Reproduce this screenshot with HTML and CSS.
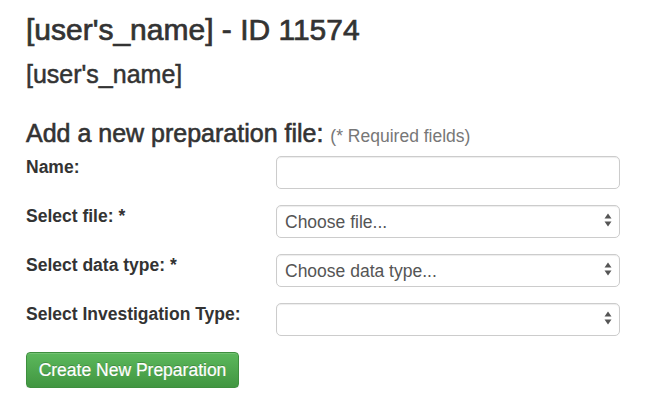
FILE: index.html
```html
<!DOCTYPE html>
<html>
<head>
<meta charset="utf-8">
<link rel="stylesheet" href="styles.css">
</head>
<body>
<div class="page">
  <h2 class="title">[user's_name] - ID 11574</h2>
  <h3 class="subtitle">[user's_name]</h3>
  <h3 class="section">Add a new preparation file: <small class="req">(* Required fields)</small></h3>
  <form class="form">
    <div class="row">
      <label class="label">Name:</label>
      <input class="control" type="text">
    </div>
    <div class="row">
      <label class="label">Select file: *</label>
      <div class="select-wrap">
        <select class="control select"><option>Choose file...</option></select>
        <svg class="arrows" width="8" height="14" viewBox="0 0 8 14"><path d="M0.5 5.5 L4 0.5 L7.5 5.5 Z" fill="#555"/><path d="M0.5 8.5 L4 13.5 L7.5 8.5 Z" fill="#555"/></svg>
      </div>
    </div>
    <div class="row">
      <label class="label">Select data type: *</label>
      <div class="select-wrap">
        <select class="control select"><option>Choose data type...</option></select>
        <svg class="arrows" width="8" height="14" viewBox="0 0 8 14"><path d="M0.5 5.5 L4 0.5 L7.5 5.5 Z" fill="#555"/><path d="M0.5 8.5 L4 13.5 L7.5 8.5 Z" fill="#555"/></svg>
      </div>
    </div>
    <div class="row">
      <label class="label">Select Investigation Type:</label>
      <div class="select-wrap">
        <select class="control select"><option></option></select>
        <svg class="arrows" width="8" height="14" viewBox="0 0 8 14"><path d="M0.5 5.5 L4 0.5 L7.5 5.5 Z" fill="#555"/><path d="M0.5 8.5 L4 13.5 L7.5 8.5 Z" fill="#555"/></svg>
      </div>
    </div>
    <button class="btn" type="button">Create New Preparation</button>
  </form>
</div>
</body>
</html>
```

FILE: styles.css
```css
html, body {
  margin: 0;
  padding: 0;
  background: #fff;
}
.page {
  padding: 12px 0 0 26px;
  font-family: "Liberation Sans", Arial, sans-serif;
  color: #333;
}
.title {
  margin: 0;
  font-size: 30px;
  line-height: 36px;
  font-weight: normal;
  color: #333;
  -webkit-text-stroke: 0.7px #333;
}
.subtitle {
  margin: 11px 0 0 0;
  font-size: 25px;
  line-height: 30px;
  font-weight: normal;
  -webkit-text-stroke: 0.5px #333;
}
.section {
  margin: 29px 0 0 0;
  font-size: 25px;
  line-height: 30px;
  font-weight: normal;
  -webkit-text-stroke: 0.6px #333;
}
.req {
  font-size: 17.5px;
  color: #777;
  -webkit-text-stroke: 0;
}
.form {
  margin-top: 5px;
  display: flex;
  flex-direction: column;
  gap: 16px;
}
.row {
  display: flex;
  height: 33px;
}
.label {
  width: 250px;
  flex: none;
  padding-top: 1px;
  font-size: 17.5px;
  line-height: 20px;
  font-weight: bold;
  color: #333;
}
.control {
  box-sizing: border-box;
  width: 344px;
  height: 33px;
  margin: 0;
  border: 1px solid #ccc;
  border-radius: 5px;
  background: #fff;
  font-family: "Liberation Sans", Arial, sans-serif;
  font-size: 17.5px;
  color: #555;
  padding: 0 8px;
  box-shadow: inset 0 1px 1px rgba(0,0,0,0.075);
  outline: none;
}
.select-wrap {
  position: relative;
  width: 344px;
  height: 33px;
}
.select {
  -webkit-appearance: none;
  appearance: none;
  display: block;
}
.arrows {
  position: absolute;
  right: 8px;
  top: 8px;
  pointer-events: none;
}
.btn {
  align-self: flex-start;
  box-sizing: border-box;
  width: 213px;
  height: 36px;
  margin: 0;
  padding: 0 10px;
  border: 1px solid #3e8f3e;
  border-radius: 4px;
  background: linear-gradient(to bottom, #5cb85c 0%, #419641 100%);
  color: #fff;
  font-family: "Liberation Sans", Arial, sans-serif;
  font-size: 17.5px;
  -webkit-text-stroke: 0.2px #fff;
  text-shadow: 0 -1px 0 rgba(0,0,0,0.2);
  box-shadow: inset 0 1px 0 rgba(255,255,255,0.15), 0 1px 1px rgba(0,0,0,0.075);
}
```
